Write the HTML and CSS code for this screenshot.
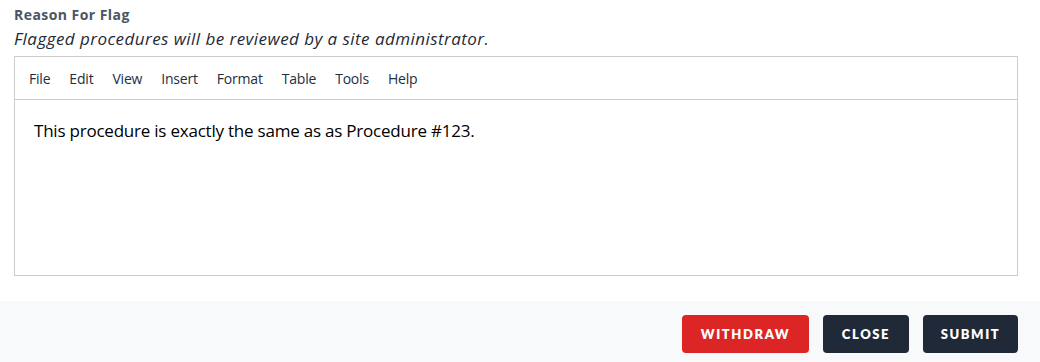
FILE: index.html
```
<!DOCTYPE html>
<html>
<head>
<meta charset="utf-8">
<link rel="stylesheet" href="styles.css">
</head>
<body>
<div class="form">
  <div class="label">Reason For Flag</div>
  <div class="hint">Flagged procedures will be reviewed by a site administrator.</div>
  <div class="editor">
    <div class="menubar">
      <span class="menu">File</span>
      <span class="menu">Edit</span>
      <span class="menu">View</span>
      <span class="menu">Insert</span>
      <span class="menu">Format</span>
      <span class="menu">Table</span>
      <span class="menu">Tools</span>
      <span class="menu">Help</span>
    </div>
    <div class="content">
      <p>This procedure is exactly the same as as Procedure #123.</p>
    </div>
  </div>
</div>
<div class="footer">
  <button class="btn btn-red">Withdraw</button>
  <button class="btn btn-dark">Close</button>
  <button class="btn btn-dark">Submit</button>
</div>
</body>
</html>
```
FILE: styles.css
```
html, body {
  margin: 0;
  padding: 0;
  background: #ffffff;
}
body {
  width: 1040px;
  height: 362px;
  overflow: hidden;
  font-family: "Open Sans", sans-serif;
  color: #1f2937;
}
.form {
  padding: 5px 22px 0 14px;
  height: 296px;
  box-sizing: border-box;
}
.label {
  font-size: 14px;
  font-weight: 700;
  color: #4b5563;
  line-height: 20px;
  height: 20px;
  letter-spacing: 0.45px;
}
.hint {
  font-size: 17px;
  font-style: italic;
  line-height: 26px;
  margin-top: 1px;
  color: #1f2937;
  letter-spacing: 0.45px;
}
.editor {
  margin-top: 4px;
  border: 1px solid #cccccc;
  height: 220px;
  box-sizing: border-box;
  display: flex;
  flex-direction: column;
}
.menubar {
  height: 42px;
  border-bottom: 1px solid #cccccc;
  display: flex;
  align-items: center;
  padding: 0 6px;
  gap: 3px;
  font-family: "Open Sans", sans-serif;
  font-size: 14px;
  color: #222f3e;
}
.menu {
  padding: 0 8px;
  letter-spacing: -0.2px;
}
.content {
  padding: 0 19px;
  font-family: "Open Sans", sans-serif;
  font-size: 17px;
  color: #000000;
}
.content p {
  margin: 19px 0 0 0;
  line-height: 24px;
  letter-spacing: -0.22px;
}
.footer {
  margin-top: 5px;
  height: 61px;
  background: #f8f9fb;
  display: flex;
  justify-content: flex-end;
  align-items: flex-start;
  padding: 14px 22px 0 0;
  box-sizing: border-box;
  gap: 14px;
}
.btn {
  height: 38px;
  border: none;
  border-radius: 4px;
  color: #ffffff;
  font-family: "Lato", sans-serif;
  font-weight: 800;
  font-size: 13px;
  letter-spacing: 1.6px;
  text-transform: uppercase;
  padding: 0;
}
.btn-red {
  background: #dc2626;
  width: 127px;
}
.btn-dark {
  background: #1f2937;
}
.btn-dark:nth-child(2) { width: 86px; }
.btn-dark:nth-child(3) { width: 95px; }
```
